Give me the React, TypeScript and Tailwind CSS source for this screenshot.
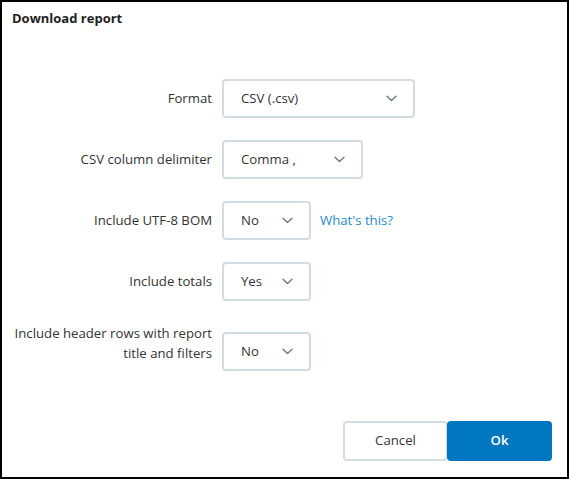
import React from "react";

function Chevron() {
  return (
    <svg width="11" height="7" viewBox="0 0 11 7" fill="none">
      <path d="M1 1.2 L5.5 5.6 L10 1.2" stroke="#6b7b8e" strokeWidth="1.4" strokeLinecap="round" strokeLinejoin="round" />
    </svg>
  );
}

function Select({ value, width }: { value: string; width: string }) {
  return (
    <div
      className={`${width} h-[39px] flex items-center justify-between pl-[17px] pr-[16px] border-2 border-[#d3dbe3] rounded-[4px] bg-white text-[13.2px] text-[#333]`}
    >
      <span>{value}</span>
      <Chevron />
    </div>
  );
}

export default function App() {
  return (
    <div
      className="w-[569px] h-[479px] border-2 border-black bg-white flex flex-col text-[#333]"
      style={{ fontFamily: '"Open Sans", "Noto Sans", Arial, sans-serif' }}
    >
      <div className="pl-[10px] pt-[7px] text-[13px] leading-[18px] font-bold text-[#222]">Download report</div>
      <div className="mt-[52px] flex flex-col gap-[22px]">
        <div className="flex items-center gap-[10px]">
          <div className="w-[210px] text-right text-[13.2px]">Format</div>
          <Select value="CSV (.csv)" width="w-[193px]" />
        </div>
        <div className="flex items-center gap-[10px]">
          <div className="w-[210px] text-right text-[13.2px]">CSV column delimiter</div>
          <Select value="Comma ," width="w-[141px]" />
        </div>
        <div className="flex items-center gap-[10px]">
          <div className="w-[210px] text-right text-[13.2px]">Include UTF-8 BOM</div>
          <Select value="No" width="w-[89px]" />
          <a className="text-[13.2px] text-[#1a8bd2] -ml-[1px]">What's this?</a>
        </div>
        <div className="flex items-center gap-[10px]">
          <div className="w-[210px] text-right text-[13.2px]">Include totals</div>
          <Select value="Yes" width="w-[89px]" />
        </div>
        <div className="flex items-end gap-[10px]">
          <div className="w-[210px] text-right text-[13.2px] leading-[20px] pb-[8px]">
            Include header rows with report
            <br />
            title and filters
          </div>
          <Select value="No" width="w-[89px]" />
        </div>
      </div>
      <div className="flex-1" />
      <div className="flex justify-end pr-[15px] pb-[16px]">
        <button className="w-[105px] h-[40px] border-2 border-[#d3dbe3] rounded-[4px] bg-white text-[13.2px] text-[#333]">
          Cancel
        </button>
        <button className="w-[105px] h-[40px] -ml-[1px] rounded-[4px] bg-[#0077c0] text-[13.2px] font-semibold text-white">
          Ok
        </button>
      </div>
    </div>
  );
}
